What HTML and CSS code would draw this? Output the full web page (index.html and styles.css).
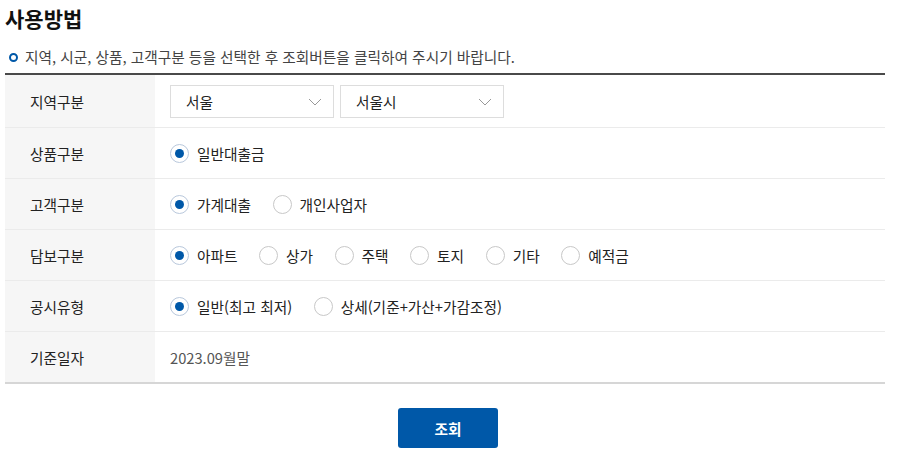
FILE: index.html
```html
<!DOCTYPE html>
<html lang="ko">
<head>
<meta charset="utf-8">
<link rel="stylesheet" href="styles.css">
</head>
<body>
<div class="page">
  <h2 class="title">사용방법</h2>
  <p class="guide"><span class="bullet"></span>지역, 시군, 상품, 고객구분 등을 선택한 후 조회버튼을 클릭하여 주시기 바랍니다.</p>
  <div class="table">
    <div class="row">
      <div class="th">지역구분</div>
      <div class="td">
        <div class="select"><span>서울</span><svg width="14" height="8" viewBox="0 0 14 8"><path d="M1 1l6 6 6-6" fill="none" stroke="#999" stroke-width="1"/></svg></div>
        <div class="select"><span>서울시</span><svg width="14" height="8" viewBox="0 0 14 8"><path d="M1 1l6 6 6-6" fill="none" stroke="#999" stroke-width="1"/></svg></div>
      </div>
    </div>
    <div class="row">
      <div class="th">상품구분</div>
      <div class="td">
        <label class="radio on"><span class="dot"></span>일반대출금</label>
      </div>
    </div>
    <div class="row">
      <div class="th">고객구분</div>
      <div class="td">
        <label class="radio on"><span class="dot"></span>가계대출</label>
        <label class="radio"><span class="dot"></span>개인사업자</label>
      </div>
    </div>
    <div class="row">
      <div class="th">담보구분</div>
      <div class="td">
        <label class="radio on"><span class="dot"></span>아파트</label>
        <label class="radio"><span class="dot"></span>상가</label>
        <label class="radio"><span class="dot"></span>주택</label>
        <label class="radio"><span class="dot"></span>토지</label>
        <label class="radio"><span class="dot"></span>기타</label>
        <label class="radio"><span class="dot"></span>예적금</label>
      </div>
    </div>
    <div class="row">
      <div class="th">공시유형</div>
      <div class="td">
        <label class="radio on"><span class="dot"></span>일반(최고 최저)</label>
        <label class="radio"><span class="dot"></span>상세(기준+가산+가감조정)</label>
      </div>
    </div>
    <div class="row">
      <div class="th">기준일자</div>
      <div class="td date">2023.09월말</div>
    </div>
  </div>
  <div class="actions"><button class="btn">조회</button></div>
</div>
</body>
</html>
```
FILE: styles.css
```css
* { box-sizing: border-box; }
html, body { margin: 0; padding: 0; background: #fff; }
body {
  font-family: "Noto Sans CJK KR", "Noto Sans", "Liberation Sans", sans-serif;
  color: #222;
}
.page { width: 880px; margin-left: 5px; }
.title {
  margin: 0;
  padding-top: 4px;
  font-size: 21px;
  line-height: 28px;
  font-weight: 700;
  color: #111;
}
.guide {
  margin: 15px 0 0;
  display: flex;
  align-items: center;
  font-size: 14.7px;
  line-height: 20px;
  color: #444;
  padding-bottom: 6px;
}
.bullet {
  width: 9px;
  height: 9px;
  border: 2px solid #0058a8;
  border-radius: 50%;
  margin: 0 7px 0 4px;
}
.table {
  border-top: 2px solid #4a4a4a;
  border-bottom: 2px solid #d6d6d6;
}
.row {
  display: flex;
  height: 51px;
  border-top: 1px solid #ebebeb;
}
.row:first-child { border-top: 0; height: 52px; }
.th {
  width: 150px;
  background: #f6f6f6;
  display: flex;
  align-items: center;
  padding-left: 25px;
  font-size: 14.7px;
  color: #222;
}
.td {
  flex: 1;
  display: flex;
  align-items: center;
  padding-left: 15px;
  font-size: 14.7px;
}
.select {
  width: 164px;
  height: 33px;
  border: 1px solid #ddd;
  display: flex;
  align-items: center;
  justify-content: space-between;
  padding: 0 11px 0 15px;
  margin-right: 6px;
  color: #222;
  margin-top: 1px;
}
.radio {
  display: flex;
  align-items: center;
  margin-right: 21.5px;
  color: #222;
}
.dot {
  width: 19px;
  height: 19px;
  border: 1px solid #c8c8c8;
  border-radius: 50%;
  margin-right: 8px;
  position: relative;
  background: #fff;
}
.radio.on .dot { border-color: #b9c8dc; }
.radio.on .dot::after {
  content: "";
  position: absolute;
  left: 4px;
  top: 4px;
  width: 9px;
  height: 9px;
  border-radius: 50%;
  background: #0058a8;
}
.date { color: #555; }
.actions {
  display: flex;
  justify-content: center;
  padding: 24px 0 0 6px;
}
.btn {
  width: 100px;
  height: 40px;
  border: 0;
  border-radius: 3px;
  background: #0058a8;
  color: #fff;
  font-family: inherit;
  font-size: 14.7px;
  font-weight: 700;
}
```
